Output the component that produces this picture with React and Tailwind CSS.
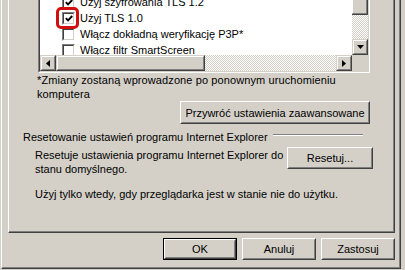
import React from 'react';

const rows = [
  { label: 'Użyj szyfrowania TLS 1.2', checked: true },
  { label: 'Użyj TLS 1.0', checked: true },
  { label: 'Włącz dokładną weryfikację P3P*', checked: false },
  { label: 'Włącz filtr SmartScreen', checked: false },
];

function Raised({ className = '', children }) {
  // classic 3D button edge
  return (
    <div className={`border border-t-white border-l-white border-r-[#404040] border-b-[#404040] ${className}`}>
      <div className="w-full h-full border border-t-[#d4d0c8] border-l-[#d4d0c8] border-r-[#808080] border-b-[#808080] flex items-center justify-center">
        {children}
      </div>
    </div>
  );
}

function Button({ label, className = '', isDefault }) {
  if (isDefault) {
    return (
      <div className={`border border-black ${className}`}>
        <Raised className="w-full h-full">{label}</Raised>
      </div>
    );
  }
  return <Raised className={className}>{label}</Raised>;
}

function Arrow({ dir }) {
  const pts = {
    down: '0,0 7,0 3.5,4',
    left: '4,0 4,7 0,3.5',
    right: '0,0 0,7 4,3.5',
  }[dir];
  const size = dir === 'down' ? { w: 7, h: 4 } : { w: 4, h: 7 };
  return (
    <svg width={size.w} height={size.h} viewBox={`0 0 ${size.w} ${size.h}`}>
      <polygon points={pts} fill="#000" />
    </svg>
  );
}

function ScrollBtn({ dir }) {
  return (
    <div className="w-[16px] h-[16px] border border-t-[#d4d0c8] border-l-[#d4d0c8] border-r-[#404040] border-b-[#404040] bg-[#d4d0c8]">
      <div className="w-full h-full border border-t-white border-l-white border-r-[#808080] border-b-[#808080] flex items-center justify-center">
        <Arrow dir={dir} />
      </div>
    </div>
  );
}

function Checkbox({ checked }) {
  return (
    <div className="w-[13px] h-[13px] shrink-0 border border-t-[#808080] border-l-[#808080] border-r-white border-b-white">
      <div className="w-full h-full border border-t-[#404040] border-l-[#404040] border-r-[#d4d0c8] border-b-[#d4d0c8] bg-white flex items-center justify-center">
        {checked && (
          <svg width="8" height="7" viewBox="0 0 8 7">
            <polyline points="0.8,3.2 3,5.4 7.2,1" fill="none" stroke="#000" strokeWidth="1.9" />
          </svg>
        )}
      </div>
    </div>
  );
}

const dither = 'bg-[repeating-conic-gradient(#ffffff_0_25%,#d4d0c8_0_50%)] bg-[length:2px_2px]';

export default function App() {
  return (
    <div className="w-[405px] h-[270px] bg-[#d4d0c8] overflow-hidden relative font-['Liberation_Sans',Arial,sans-serif] text-[11px] leading-[14px] text-black">
      <div className="ml-[1px] w-[400px] h-[269px] border-l border-l-white border-r border-r-[#404040] border-b border-b-[#404040]">
        <div className="h-full border-r border-r-[#808080] border-b border-b-[#808080] pl-[6px]">
          {/* tab panel */}
          <div className="w-[387px] h-[233px] border-l border-l-white border-r border-r-[#404040] border-b border-b-[#404040]">
            <div className="h-full border-r border-r-[#808080] border-b border-b-[#808080] flex flex-col">
              {/* settings tree */}
              <div className="ml-[29px] w-[332px] h-[73px] border-l border-l-[#808080] border-r border-r-white border-b border-b-white">
                <div className="h-full border-l border-l-[#404040] border-r border-r-[#d4d0c8] border-b border-b-[#d4d0c8] bg-white flex flex-col">
                  <div className="flex h-[55px]">
                    <div className="flex-1 overflow-hidden">
                      <div className="mt-[-6px] pl-[22px]">
                        {rows.map((r) => (
                          <div key={r.label} className="h-[16px] flex items-center gap-[5px] whitespace-nowrap">
                            <Checkbox checked={r.checked} />
                            <span>{r.label}</span>
                          </div>
                        ))}
                      </div>
                    </div>
                    <div className="w-[16px] flex flex-col">
                      <div className="h-[15px] border-r border-r-[#404040] border-b border-b-[#404040]">
                        <div className="h-full border-l border-l-white border-r border-r-[#808080] border-b border-b-[#808080] bg-[#d4d0c8]" />
                      </div>
                      <div className={`flex-1 ${dither}`} />
                      <ScrollBtn dir="down" />
                    </div>
                  </div>
                  <div className="flex h-[16px]">
                    <ScrollBtn dir="left" />
                    <div className="w-[149px] border border-t-[#d4d0c8] border-l-[#d4d0c8] border-r-[#404040] border-b-[#404040] bg-[#d4d0c8]">
                      <div className="h-full border border-t-white border-l-white border-r-[#808080] border-b-[#808080]" />
                    </div>
                    <div className={`flex-1 ${dither}`} />
                    <ScrollBtn dir="right" />
                    <div className="w-[16px] bg-[#d4d0c8]" />
                  </div>
                </div>
              </div>

              <p className="pl-[28px] whitespace-nowrap tracking-[0.1px]">
                *Zmiany zostaną wprowadzone po ponownym uruchomieniu
                <br />
                komputera
              </p>

              <Button label="Przywróć ustawienia zaawansowane" className="ml-[171px] w-[190px] h-[23px]" />

              {/* reset group */}
              <div className="mt-[6px] pl-[14px] flex items-start">
                <span className="whitespace-nowrap">Resetowanie ustawień programu Internet Explorer</span>
                <div className="flex-1 ml-[5px] mr-[30px] mt-[4px] h-[2px] border-t border-t-[#808080] border-b border-b-white" />
              </div>

              <div className="mt-[3px] flex items-start">
                <p className="mt-[1px] pl-[26px] whitespace-nowrap">
                  Resetuje ustawienia programu Internet Explorer do
                  <br />
                  stanu domyślnego.
                </p>
                <Button label="Resetuj..." className="ml-auto mr-[20px] w-[86px] h-[22px]" />
              </div>

              <p className="mt-[11px] pl-[26px] whitespace-nowrap">
                Użyj tylko wtedy, gdy przeglądarka jest w stanie nie do użytku.
              </p>
            </div>
          </div>

          {/* dialog buttons */}
          <div className="w-[387px] mt-[5px] flex justify-end gap-[5px]">
            <Button label="OK" isDefault className="w-[74px] h-[22px]" />
            <Button label="Anuluj" className="w-[74px] h-[22px]" />
            <Button label="Zastosuj" className="w-[74px] h-[22px]" />
          </div>
        </div>
      </div>

      {/* highlight annotation */}
      <div className="absolute left-[56px] top-[7px] w-[23px] h-[22px] border-[3px] border-[#d10f0f] rounded-[5px]" />
    </div>
  );
}
